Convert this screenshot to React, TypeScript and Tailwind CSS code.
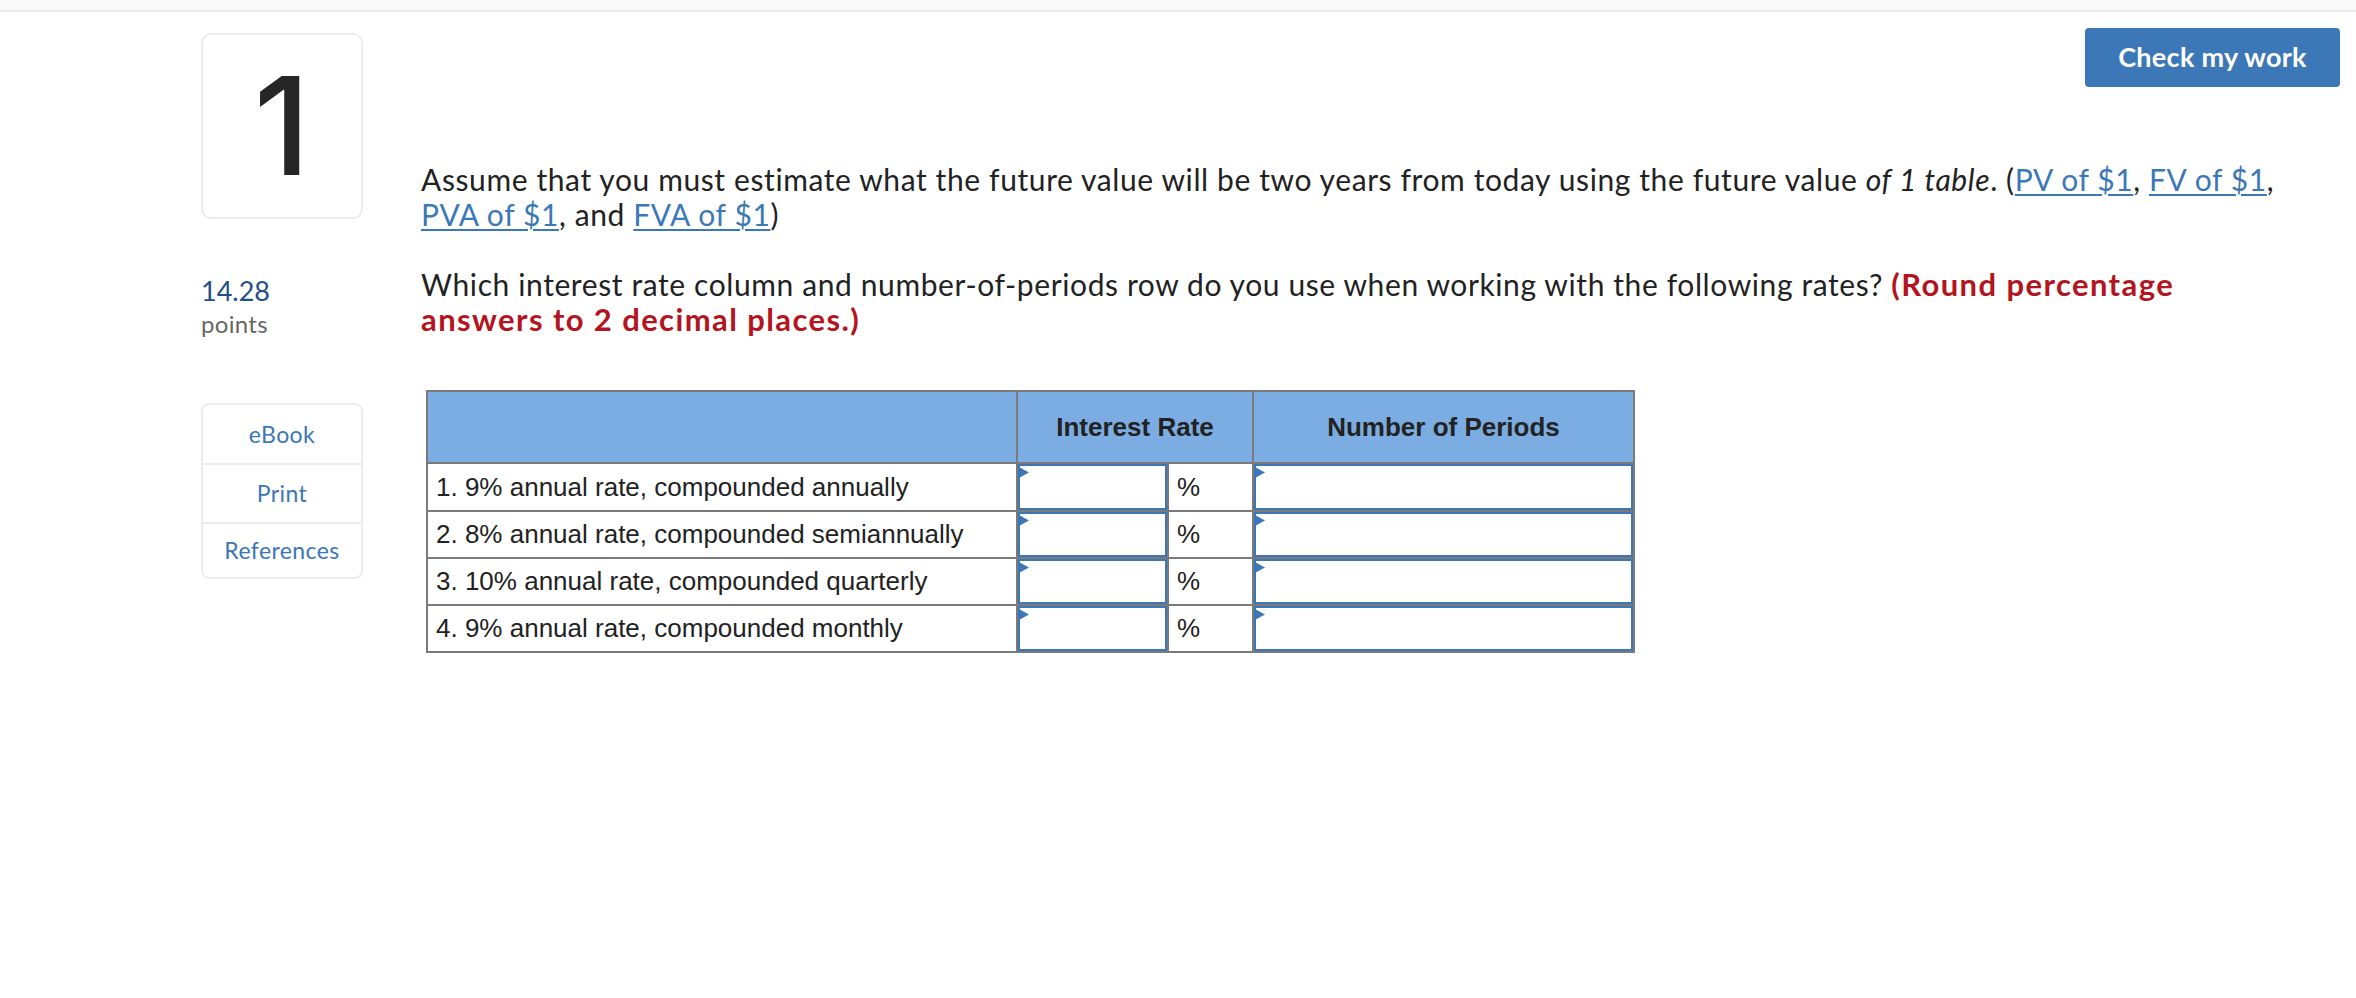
const rows = [
  "1. 9% annual rate, compounded annually",
  "2. 8% annual rate, compounded semiannually",
  "3. 10% annual rate, compounded quarterly",
  "4. 9% annual rate, compounded monthly",
];

const rowHeights = ["h-[46px]", "h-[45px]", "h-[45px]", "h-[45px]"];

function Marker() {
  return (
    <svg
      className="absolute left-[1px] top-[3px]"
      width="10"
      height="11"
      viewBox="0 0 10 11"
    >
      <polygon points="0,0 10,5.5 0,11" fill="#3d77b6" />
    </svg>
  );
}

function AnswerInput() {
  return (
    <div className="relative h-full bg-white">
      <input
        type="text"
        className="h-full w-full border-2 border-[#3d77b6] bg-white px-2 outline-none"
      />
      <Marker />
    </div>
  );
}

function Link({ children }: { children: React.ReactNode }) {
  return (
    <a href="#" className="text-[#3b78b8] underline decoration-2 underline-offset-[3px]">
      {children}
    </a>
  );
}

export default function App() {
  return (
    <div className="min-h-screen bg-white font-['Lato',sans-serif] text-[#222]">
      {/* top strip */}
      <div className="h-[12px] border-b-2 border-[#ececec] bg-[#fafafa]" />

      <div className="flex pl-[201px] pr-[16px]">
        {/* left column */}
        <aside className="w-[162px] shrink-0 pt-[21px]">
          <div className="flex h-[186px] items-center justify-center rounded-[10px] border-2 border-[#ececec] font-['Inter',sans-serif] text-[136px] font-medium leading-none text-[#262626]">
            1
          </div>

          <div className="mt-[56px] text-[27px] leading-[32px] text-[#1f4f8a]">14.28</div>
          <div className="mt-[1px] text-[24px] leading-[32px] tracking-[0.3px] text-[#666]">points</div>

          <div className="mt-[63px] overflow-hidden rounded-[8px] border-2 border-[#ececec] text-[23px] tracking-[0.4px] text-[#3a77b6]">
            <div className="flex h-[58px] items-center justify-center">eBook</div>
            <div className="flex h-[59px] items-center justify-center border-t-2 border-[#ececec]">Print</div>
            <div className="flex h-[55px] items-center justify-center border-t-2 border-[#ececec]">References</div>
          </div>
        </aside>

        {/* question */}
        <main className="ml-[58px] flex-1">
          <div className="flex justify-end pt-[16px]">
            <button className="h-[59px] w-[255px] rounded-[4px] bg-[#3c78b8] text-[27px] font-bold tracking-[0.3px] text-white">
              Check my work
            </button>
          </div>

          <div className="mt-[75px] max-w-[1875px] text-[30px] leading-[35px] tracking-[0.6px]">
            <p>
              Assume that you must estimate what the future value will be two years from today using the future
              value <i>of 1 table</i>. (<Link>PV of $1</Link>, <Link>FV of $1</Link>, <Link>PVA of $1</Link>, and{" "}
              <Link>FVA of $1</Link>)
            </p>
            <p className="mt-[35px]">
              Which interest rate column and number-of-periods row do you use when working with the following rates?{" "}
              <b className="text-[31px] tracking-[1.4px] text-[#b3141e]">
                (Round percentage answers to 2 decimal places.)
              </b>
            </p>
          </div>

          {/* answer table */}
          <div className="ml-[5px] mt-[53px] inline-grid grid-cols-[588px_149px_83px_379px] gap-[2px] border-2 border-[#7a7a7a] bg-[#7a7a7a] font-['Liberation_Sans',Arial,sans-serif] text-[26px] text-[#222]">
            <div className="h-[70px] bg-[#7badE2]" />
            <div className="col-span-2 flex h-[70px] items-center justify-center bg-[#7badE2] font-bold">
              Interest Rate
            </div>
            <div className="flex h-[70px] items-center justify-center bg-[#7badE2] font-bold">Number of Periods</div>

            {rows.map((label, i) => (
              <div key={label} className="contents">
                <div className={`flex items-center bg-white pl-[8px] ${rowHeights[i]}`}>{label}</div>
                <div className={rowHeights[i]}>
                  <AnswerInput />
                </div>
                <div className={`flex items-center bg-white pl-[8px] ${rowHeights[i]}`}>%</div>
                <div className={rowHeights[i]}>
                  <AnswerInput />
                </div>
              </div>
            ))}
          </div>
        </main>
      </div>
    </div>
  );
}
